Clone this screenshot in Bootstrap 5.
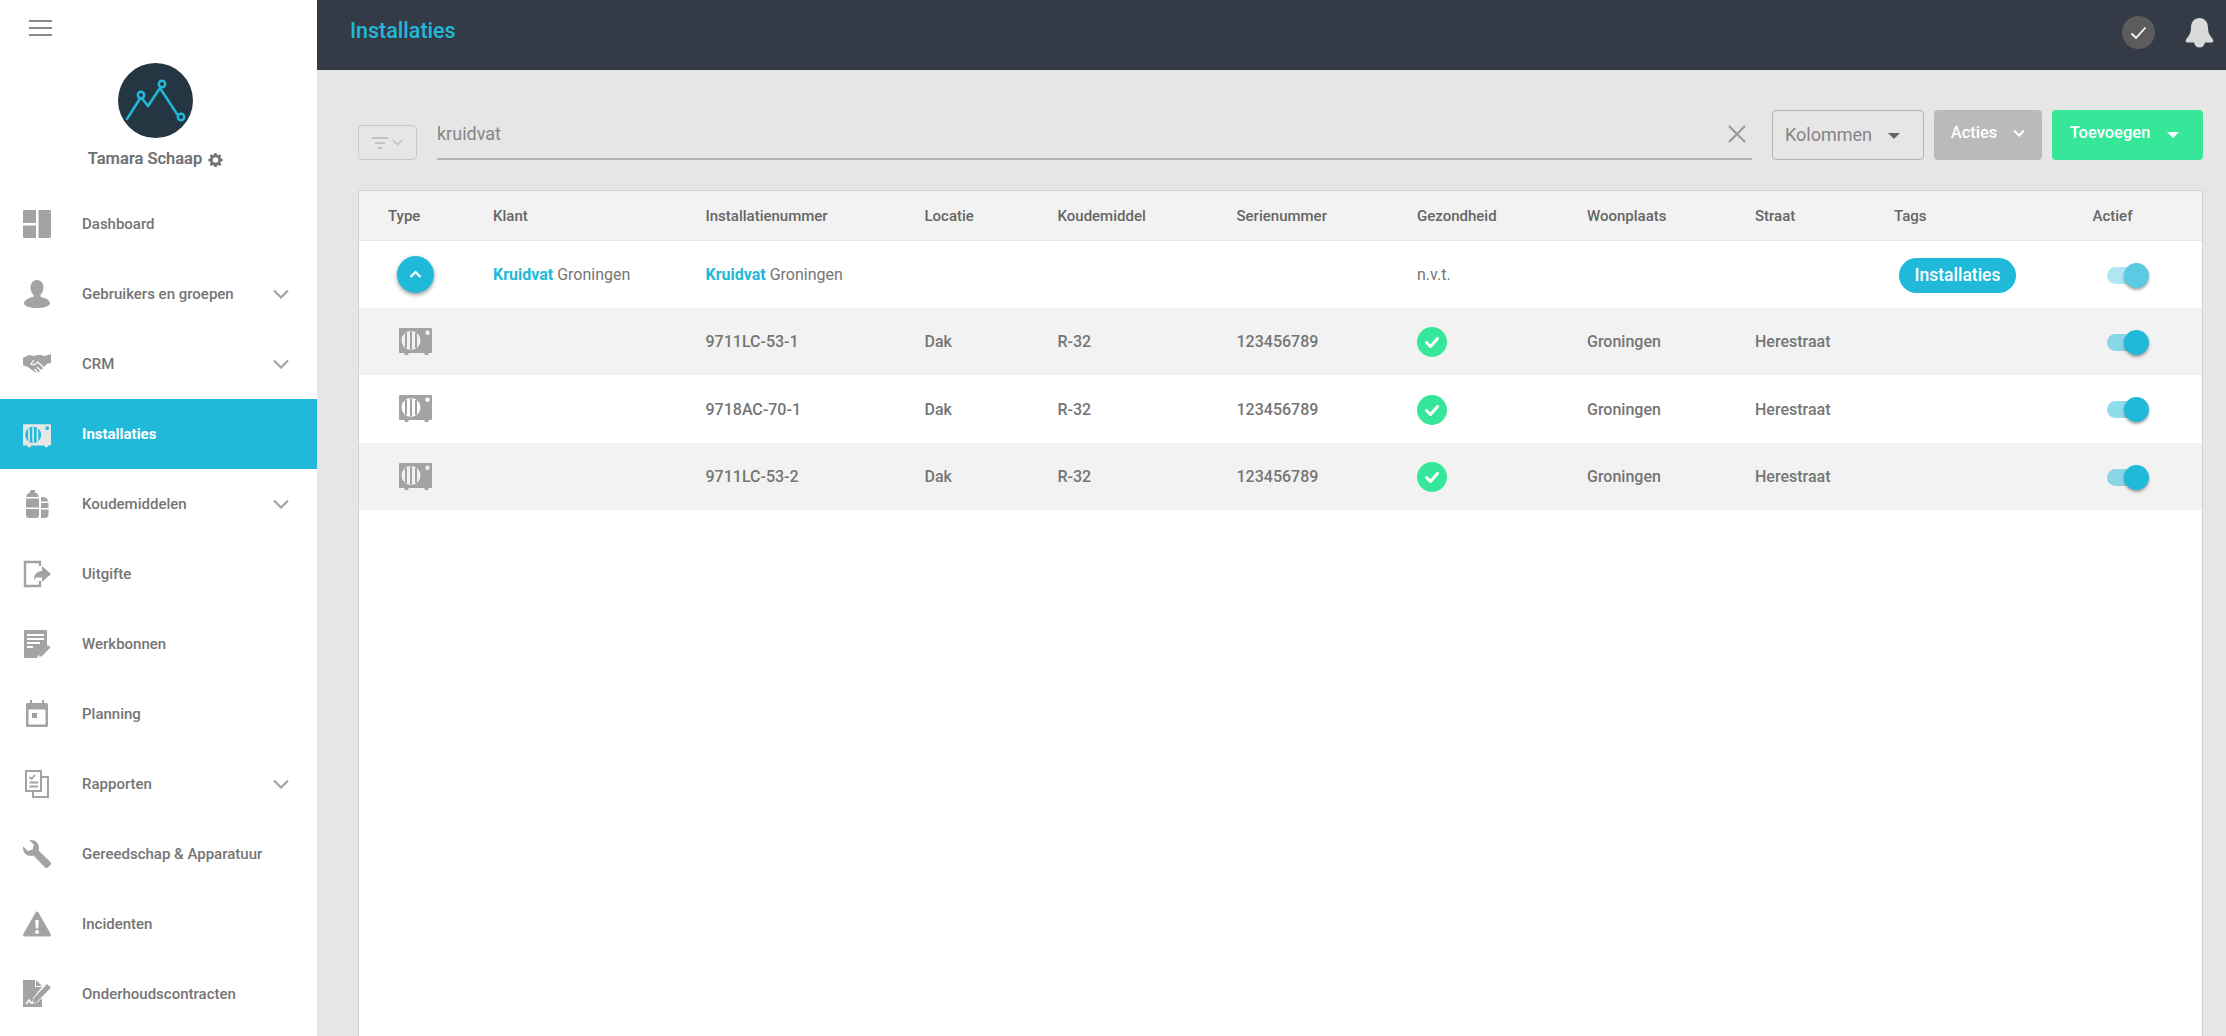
<!DOCTYPE html>
<html lang="nl">
<head>
<meta charset="utf-8">
<title>Installaties</title>
<link href="https://cdn.jsdelivr.net/npm/bootstrap@5.3.0/dist/css/bootstrap.min.css" rel="stylesheet">
<style>
html,body{height:100%;overflow:hidden}
body{font-family:Roboto,"Liberation Sans",sans-serif;background:#e6e6e6;color:#757575;font-size:15px}
.app-shell{height:1036px}
.side-panel{width:317px;flex:none;background:#fff;overflow:hidden}
.burger-wrap{height:63px;padding:20px 0 0 29px}
.burger-wrap svg{display:block}
.avatar-disc{width:75px;height:75px;display:block;margin:0 0 0 118px}
.user-line{margin-top:11px;height:20px;width:311px;font-size:16.500px;font-weight:500;color:#6f6f6f;line-height:20px;-webkit-text-stroke:.2px #6f6f6f;gap:6px}
.menu-list{margin-top:20px}
.menu-list .nav-link{height:70px;display:flex;align-items:center;padding:0 0 0 23px;color:#757575;font-weight:500;font-size:15px}
.menu-list .nav-link.current{background:#20b9d9;color:#fff;font-weight:700}
.menu-ico{width:28px;height:28px;flex:none;margin-right:31px;color:#a3a3a3;display:block}
.current .menu-ico{color:#e6e6e6}
.menu-chev{margin-left:auto;margin-right:28px;flex:none}
.main-pane{min-width:0}
.top-strip{height:70px;flex:none;background:#343a46;padding:0 12px 0 33px}
.page-name{font-size:21.500px;font-weight:500;color:#20b9d9;margin:0 0 8px}
.check-disc{width:33px;height:33px;border-radius:50%;background:#5c5c5c;margin-right:30px;margin-bottom:5px}
.work-area{padding:40px 23px 0 41px;flex:1;min-height:0}
.tool-row{height:50px}
.filter-box{width:59px;height:35px;border:1px solid #c9c9c9;border-radius:4px;padding:0;margin-right:20px;align-self:flex-end}
.search-wrap{flex:1;height:50px;border-bottom:2px solid #b3b3b3;margin-right:20px}
.search-field{height:48px;border:0;background:transparent;padding:0 0 2px;font-size:18px;color:#858585;box-shadow:none;border-radius:0}
.search-field:focus{background:transparent;box-shadow:none;color:#858585}
.clear-x{right:6px}
.action-btn{height:50px;font-size:16px;padding:0;border-radius:4px;display:flex;align-items:center;justify-content:center}
.btn-cols{width:152px;border:1px solid #b3b3b3;color:#858585;margin-right:10px;font-size:18px;font-weight:400;padding-right:11px;padding-bottom:2px}
.btn-acts{width:108px;background:#bababa;color:#fff;font-weight:500;margin-right:10px;border:0;padding-bottom:4px;font-size:16.500px}
.btn-add{width:151px;background:#36e79a;color:#fff;font-weight:500;border:0;padding:0 6px 4px 0;font-size:16.500px}
.caret-mark{width:0;height:0;border-left:6px solid transparent;border-right:6px solid transparent;border-top:6px solid currentColor;display:inline-block}
.btn-cols .caret-mark{margin-left:16px;color:#666;margin-top:3px}
.btn-add .caret-mark{margin-left:17px;margin-top:3px}
.grid-card{margin-top:30px;background:#fff;border:1px solid #d2d2d2;border-bottom:0;flex:1;border-radius:0}
.data-grid{table-layout:fixed;width:1843px;margin:0;color:#757575;--bs-table-bg:transparent;--bs-table-color:#757575}
.data-grid col:nth-child(1){width:134px}
.data-grid col:nth-child(2){width:212.500px}
.data-grid col:nth-child(3){width:219px}
.data-grid col:nth-child(4){width:133px}
.data-grid col:nth-child(5){width:179px}
.data-grid col:nth-child(6){width:180.500px}
.data-grid col:nth-child(7){width:170px}
.data-grid col:nth-child(8){width:168px}
.data-grid col:nth-child(9){width:139px}
.data-grid col:nth-child(10){width:198.500px}
.data-grid th{height:49px;background:#f2f2f2;border-bottom:1px solid #e6e6e6;color:#666;font-weight:500;font-size:15px;padding:2px 0 0;vertical-align:middle}
.data-grid th:first-child{padding-left:29px}
.data-grid td{height:67.500px;padding:2px 0 0;border:0;vertical-align:middle;font-size:16px;font-weight:400;white-space:nowrap}
.data-grid td:first-child{padding:0 0 0 38px}
.data-grid td.med{font-weight:500}
.shade-row td{background:#f2f2f2}
.hit-word{color:#20b9d9;font-weight:700}
.round-up{width:37px;height:37px;border-radius:50%;background:#20b9d9;box-shadow:0 2px 4px rgba(0,0,0,.4);padding:0;border:0;display:flex;align-items:center;justify-content:center}
.unit-ico{width:33px;height:27px;color:#a3a3a3;display:block;margin-left:2px}
.ok-ico{width:30px;height:30px;display:block}
.tag-pill{display:inline-block;margin-left:5px;width:117px;height:35px;line-height:35px;border-radius:18px;background:#20b9d9;color:#fff;font-size:17.500px;font-weight:500;text-align:center}
.mini-switch{display:block;position:relative;width:42px;height:25px;margin-left:14px}
.mini-switch::before{content:"";position:absolute;left:0;top:4px;width:30px;height:17px;border-radius:9px;background:#20b9d9;opacity:.5}
.mini-switch::after{content:"";position:absolute;left:17px;top:0;width:25px;height:25px;border-radius:50%;background:#20b9d9;box-shadow:0 2px 3px rgba(0,0,0,.35)}
.mini-switch.dim::before{opacity:.35}
.mini-switch.dim::after{background:#5ccae3}
</style>
</head>
<body>
<svg width="0" height="0" class="d-block position-absolute">
<defs>
<symbol id="i-unit" viewBox="0 0 33 27"><path fill="currentColor" fill-rule="evenodd" d="M1 0h31a1 1 0 0 1 1 1v23a1 1 0 0 1-1 1h-2.500v1a1 1 0 0 1-1 1h-2a1 1 0 0 1-1-1v-1H9.500v1a1 1 0 0 1-1 1h-2a1 1 0 0 1-1-1v-1H1a1 1 0 0 1-1-1V1a1 1 0 0 1 1-1zM12 3a9.500 9.500 0 1 0 0 19 9.500 9.500 0 0 0 0-19zM28.500 2.500a2.200 2.200 0 1 0 0 4.400 2.200 2.200 0 0 0 0-4.400z"/><path fill="currentColor" d="M6 5h2v15H6zM11 3.500h2v18h-2zM16 5h2v15h-2z"/></symbol>
<symbol id="i-ok" viewBox="0 0 30 30"><circle cx="15" cy="15" r="15" fill="#36e79a"/><path d="M9.500 15.500l4 4 7-8" fill="none" stroke="#fff" stroke-width="3" stroke-linecap="round" stroke-linejoin="round"/></symbol>
<symbol id="i-chev" viewBox="0 0 16 10"><path d="M1 1.500l7 7 7-7" fill="none" stroke="#a3a3a3" stroke-width="2.200"/></symbol>
</defs>
</svg>
<div class="app-shell d-flex">
<aside class="side-panel d-flex flex-column">
<div class="burger-wrap"><svg width="23" height="16" viewBox="0 0 23 16"><path d="M0 1h23M0 8h23M0 15h23" stroke="#8a8a8a" stroke-width="2"/></svg></div>
<svg class="avatar-disc" viewBox="0 0 75 75"><circle cx="37.500" cy="37.500" r="37.500" fill="#243642"/><path d="M9 56l14-22 7 9 12-18 17 26" fill="none" stroke="#20b9d9" stroke-width="2.500" stroke-linecap="round" stroke-linejoin="round"/><circle cx="23" cy="32" r="3.200" fill="#243642" stroke="#20b9d9" stroke-width="2.500"/><circle cx="44" cy="21" r="3.200" fill="#243642" stroke="#20b9d9" stroke-width="2.500"/><circle cx="63" cy="54" r="3.200" fill="#243642" stroke="#20b9d9" stroke-width="2.500"/></svg>
<div class="user-line d-flex justify-content-center align-items-center"><span>Tamara Schaap</span><svg width="15" height="15" viewBox="0 0 16 16"><path fill="#757575" fill-rule="evenodd" d="M6.800 1h2.400l.4 1.800 1.300.6 1.600-1 1.700 1.700-1 1.600.6 1.300 1.800.4v2.400l-1.800.4-.6 1.300 1 1.600-1.700 1.700-1.600-1-1.300.6-.4 1.800H6.800l-.4-1.800-1.300-.6-1.600 1-1.700-1.700 1-1.600-.6-1.300L.4 9.800V7.400l1.800-.4.6-1.300-1-1.600 1.700-1.700 1.600 1 1.300-.6zM8 5.600a2.900 2.900 0 1 0 0 5.800 2.900 2.900 0 0 0 0-5.800z"/></svg></div>
<nav class="nav flex-column menu-list">
<a class="nav-link" href="#"><svg class="menu-ico" viewBox="0 0 28 28"><path fill="currentColor" d="M1 0h12v13H0V1a1 1 0 0 1 1-1zM0 15.500h13V28H1a1 1 0 0 1-1-1zM15.500 0H27a1 1 0 0 1 1 1v26a1 1 0 0 1-1 1H15.500z"/></svg>Dashboard</a>
<a class="nav-link" href="#"><svg class="menu-ico" viewBox="0 0 28 28"><path fill="currentColor" d="M14 0c3.700 0 6.500 3 6.500 7.500 0 3-1.300 5.800-3 7.200v2c3 1 9.500 2.300 9.500 6.700 0 2.300-6 4.600-13 4.600S1 25.700 1 23.400c0-4.400 6.500-5.700 9.500-6.700v-2c-1.700-1.400-3-4.200-3-7.200C7.500 3 10.300 0 14 0z"/></svg>Gebruikers en groepen<svg class="menu-chev" width="16" height="10"><use href="#i-chev"/></svg></a>
<a class="nav-link" href="#"><svg class="menu-ico" viewBox="0 0 28 28"><path fill="currentColor" d="M0 8l6-3 5 1 3-1 4 0 4 1 6-2v9l-4 1-6 6-3 3-3-1-3-2-4-3-5-2z"/><path d="M11 10l-3 4 3 1 4-3 7 7M14 17l4 4M11.500 19l4 4" fill="none" stroke="#fff" stroke-width="1.200"/></svg>CRM<svg class="menu-chev" width="16" height="10"><use href="#i-chev"/></svg></a>
<a class="nav-link current" href="#"><svg class="menu-ico" viewBox="0 -2 33 32"><use href="#i-unit"/></svg>Installaties</a>
<a class="nav-link" href="#"><svg class="menu-ico" viewBox="0 0 28 28"><path fill="currentColor" d="M8 0h4v2.500c2.500.7 3.500 2.500 3.600 4.500H3.400C3.500 5 4.500 3.200 7 2.500V1zM3 8.500h13v9H3zM3 19h13v6a3 3 0 0 1-3 3H6a3 3 0 0 1-3-3zM18 7h2c3 .3 5 1.500 5 4.500h-7zM18 13h7.500v5H18zM18 19.500h7.500V24a4 4 0 0 1-3 4H18z"/></svg>Koudemiddelen<svg class="menu-chev" width="16" height="10"><use href="#i-chev"/></svg></a>
<a class="nav-link" href="#"><svg class="menu-ico" viewBox="0 0 28 28"><path fill="none" stroke="currentColor" stroke-width="2.400" d="M17 6V2H2v24h15v-5"/><path fill="currentColor" d="M19 6l9 8-9 8v-4.500h-4.500c-2 0-3 1-3.500 3.500-.5-5 1.500-9.500 8-10z"/></svg>Uitgifte</a>
<a class="nav-link" href="#"><svg class="menu-ico" viewBox="0 0 28 28"><path fill="currentColor" d="M2 0h21a1 1 0 0 1 1 1v15l-9 9.500-1 2.500H2a1 1 0 0 1-1-1V1a1 1 0 0 1 1-1z"/><path fill="#fff" d="M4 4h17v2H4zM4 8h17v2H4zM4 12h13v2H4zM4 16h6v2H4z"/><path fill="#a3a3a3" d="M25 15l2.500 2.500-9 9H16V24z"/></svg>Werkbonnen</a>
<a class="nav-link" href="#"><svg class="menu-ico" viewBox="0 0 28 28"><path fill="currentColor" fill-rule="evenodd" d="M7 0h2v3h10V0h2v3h2.500a1.500 1.500 0 0 1 1.500 1.500v21a1.500 1.500 0 0 1-1.500 1.500h-19A1.500 1.500 0 0 1 3 25.500v-21A1.500 1.500 0 0 1 4.500 3H7zM5.500 9.500v15h17v-15zM9 13h5v5H9z"/></svg>Planning</a>
<a class="nav-link" href="#"><svg class="menu-ico" viewBox="0 0 28 28"><path fill="none" stroke="currentColor" stroke-width="2" d="M3 1h15v20H3zM18 7h7v20H10v-6"/><path fill="none" stroke="currentColor" stroke-width="1.800" d="M6.500 7l2 2 3.500-4M6.500 12.500H15M6.500 16.500H15"/></svg>Rapporten<svg class="menu-chev" width="16" height="10"><use href="#i-chev"/></svg></a>
<a class="nav-link" href="#"><svg class="menu-ico" viewBox="0 0 28 28"><path fill="currentColor" d="M8 0c-.5 0-1 0-1.500.2L11 5 9.500 9.500 5 11 .2 6.500C0 7 0 7.500 0 8c0 4.500 3.500 8 8 8 1 0 1.800-.2 2.500-.4L21.800 27.200a2.500 2.500 0 0 0 3.500 0l1.900-1.900a2.500 2.500 0 0 0 0-3.500L15.600 10.500c.2-.7.400-1.500.4-2.500 0-4.500-3.500-8-8-8z"/></svg>Gereedschap &amp; Apparatuur</a>
<a class="nav-link" href="#"><svg class="menu-ico" viewBox="0 0 28 28"><path fill="currentColor" fill-rule="evenodd" d="M14 1.500c.6 0 1 .3 1.300.8L27.700 24c.6 1 0 2.500-1.300 2.500H1.600C.3 26.500-.3 25 .3 24L12.700 2.300c.3-.5.7-.8 1.300-.8zM12.300 10l.5 8.500h2.400l.5-8.500zM14 20a2 2 0 1 0 0 4 2 2 0 0 0 0-4z"/></svg>Incidenten</a>
<a class="nav-link" href="#"><svg class="menu-ico" viewBox="0 0 28 28"><path fill="currentColor" d="M0 0h12v7h7l-9 11-1 6 6-2 4-4v9H0z"/><path fill="currentColor" d="M13 0l6 6h-6zM24 4l4 3.500-14 14.500-4.500 1 1-4.500z"/><path fill="none" stroke="#fff" stroke-width="1.500" d="M3 24l3-4 2 3 2-1"/></svg>Onderhoudscontracten</a>
</nav>
</aside>
<main class="main-pane flex-grow-1 d-flex flex-column">
<header class="top-strip d-flex align-items-center">
<h1 class="page-name">Installaties</h1>
<div class="check-disc ms-auto d-flex align-items-center justify-content-center"><svg width="17" height="14" viewBox="0 0 17 14"><path d="M1.500 7.500l4.500 4.500 9.500-10.500" fill="none" stroke="#fff" stroke-width="1.800"/></svg></div>
<svg width="29" height="30" viewBox="0 0 29 30" class="mb-1"><path fill="#d9d9d9" d="M14.500 0c5 0 8.500 4 8.500 9.500 0 4.500 1 7 3.500 10 1.500 1.700 2.500 3.500 1.500 4.500-.7.700-2 .500-8 .500-.5 3-2.800 5-5.500 5S9.500 27.500 9 24.500c-6 0-7.300.2-8-.5-1-1 0-2.800 1.500-4.500C5 16.500 6 14 6 9.500 6 4 9.500 0 14.500 0z"/></svg>
</header>
<section class="work-area d-flex flex-column">
<div class="tool-row d-flex">
<button class="btn filter-box d-flex align-items-center justify-content-center gap-1" type="button" aria-label="Filter"><svg width="16" height="12" viewBox="0 0 16 12"><path d="M0 1h16M3 6h10M6 11h4" stroke="#c2c2c2" stroke-width="2"/></svg><svg width="11" height="7" viewBox="0 0 11 7"><path d="M1 1l4.500 4.500L10 1" fill="none" stroke="#c2c2c2" stroke-width="1.600"/></svg></button>
<div class="search-wrap position-relative d-flex align-items-start">
<input class="form-control search-field" type="text" value="kruidvat" aria-label="Zoeken">
<svg class="position-absolute top-50 translate-middle-y clear-x" width="18" height="18" viewBox="0 0 18 18"><path d="M1 1l16 16M17 1L1 17" stroke="#9a9a9a" stroke-width="2.200"/></svg>
</div>
<button class="btn action-btn btn-cols" type="button">Kolommen<span class="caret-mark"></span></button>
<button class="btn action-btn btn-acts" type="button">Acties<svg class="ms-3" width="12" height="8" viewBox="0 0 12 8"><path d="M1 1.500l5 5 5-5" fill="none" stroke="#fff" stroke-width="2"/></svg></button>
<button class="btn action-btn btn-add" type="button">Toevoegen<span class="caret-mark"></span></button>
</div>
<div class="grid-card card">
<table class="table data-grid">
<colgroup><col><col><col><col><col><col><col><col><col><col><col></colgroup>
<thead><tr><th>Type</th><th>Klant</th><th>Installatienummer</th><th>Locatie</th><th>Koudemiddel</th><th>Serienummer</th><th>Gezondheid</th><th>Woonplaats</th><th>Straat</th><th>Tags</th><th>Actief</th></tr></thead>
<tbody>
<tr>
<td><button class="btn round-up" type="button" aria-label="Inklappen"><svg width="13" height="9" viewBox="0 0 13 9"><path d="M1.500 7l5-5 5 5" fill="none" stroke="#fff" stroke-width="2.200"/></svg></button></td>
<td><span class="hit-word">Kruidvat</span> Groningen</td>
<td><span class="hit-word">Kruidvat</span> Groningen</td>
<td></td><td></td><td></td>
<td>n.v.t.</td>
<td></td><td></td>
<td><span class="tag-pill">Installaties</span></td>
<td><span class="mini-switch dim"></span></td>
</tr>
<tr class="shade-row">
<td><svg class="unit-ico"><use href="#i-unit"/></svg></td><td></td><td class="med">9711LC-53-1</td><td class="med">Dak</td><td class="med">R-32</td><td class="med">123456789</td>
<td><svg class="ok-ico"><use href="#i-ok"/></svg></td><td class="med">Groningen</td><td class="med">Herestraat</td><td></td><td><span class="mini-switch"></span></td>
</tr>
<tr>
<td><svg class="unit-ico"><use href="#i-unit"/></svg></td><td></td><td class="med">9718AC-70-1</td><td class="med">Dak</td><td class="med">R-32</td><td class="med">123456789</td>
<td><svg class="ok-ico"><use href="#i-ok"/></svg></td><td class="med">Groningen</td><td class="med">Herestraat</td><td></td><td><span class="mini-switch"></span></td>
</tr>
<tr class="shade-row">
<td><svg class="unit-ico"><use href="#i-unit"/></svg></td><td></td><td class="med">9711LC-53-2</td><td class="med">Dak</td><td class="med">R-32</td><td class="med">123456789</td>
<td><svg class="ok-ico"><use href="#i-ok"/></svg></td><td class="med">Groningen</td><td class="med">Herestraat</td><td></td><td><span class="mini-switch"></span></td>
</tr>
</tbody>
</table>
</div>
</section>
</main>
</div>
<script src="https://cdn.jsdelivr.net/npm/bootstrap@5.3.0/dist/js/bootstrap.bundle.min.js"></script>
</body>
</html>
